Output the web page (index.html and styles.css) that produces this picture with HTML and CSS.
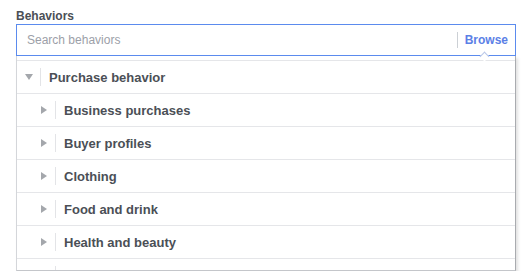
FILE: index.html
```html
<!DOCTYPE html>
<html lang="en">
<head>
  <meta charset="UTF-8" />
  <title>Behaviors</title>
  <link rel="stylesheet" href="styles.css">
</head>
<body>
  <div class="field">
    <label class="field-label" for="behaviors">Behaviors</label>
    <div class="search">
      <input id="behaviors" class="search-input" type="text" placeholder="Search behaviors" />
      <span class="search-divider"></span>
      <a class="browse" href="#">Browse</a>
      <span class="notch"></span>
    </div>

    <div class="menu">
      <ul class="tree">
        <li class="row open">
          <span class="arrow down"></span>
          <span class="row-divider"></span>
          <span class="row-text">Purchase behavior</span>
        </li>
        <li class="row child">
          <span class="arrow"></span>
          <span class="row-divider"></span>
          <span class="row-text">Business purchases</span>
        </li>
        <li class="row child">
          <span class="arrow"></span>
          <span class="row-divider"></span>
          <span class="row-text">Buyer profiles</span>
        </li>
        <li class="row child">
          <span class="arrow"></span>
          <span class="row-divider"></span>
          <span class="row-text">Clothing</span>
        </li>
        <li class="row child">
          <span class="arrow"></span>
          <span class="row-divider"></span>
          <span class="row-text">Food and drink</span>
        </li>
        <li class="row child">
          <span class="arrow"></span>
          <span class="row-divider"></span>
          <span class="row-text">Health and beauty</span>
        </li>
        <li class="row child">
          <span class="arrow"></span>
          <span class="row-divider"></span>
          <span class="row-text">Household products</span>
        </li>
      </ul>
    </div>
  </div>
</body>
</html>
```

FILE: styles.css
```css
body {
  margin: 0;
  background: #fff;
  font-family: "Liberation Sans", Arial, sans-serif;
  color: #4b4f56;
}
.field {
  width: 500px;
  padding: 9px 0 0 16px;
}
.field-label {
  display: block;
  font-size: 12px;
  font-weight: bold;
  line-height: 15px;
}
.search {
  position: relative;
  display: flex;
  align-items: center;
  height: 30px;
  border: 1px solid #5b8bee;
}
.search-input {
  flex: 1;
  border: none;
  outline: none;
  padding: 0 10px;
  font-family: inherit;
  font-size: 12px;
  color: #4b4f56;
}
.search-input::placeholder {
  color: #9ca0a8;
}
.search-divider {
  width: 1px;
  height: 16px;
  background: #ccd0d5;
  margin-right: 7px;
}
.browse {
  font-size: 12px;
  font-weight: bold;
  color: #5b80e6;
  text-decoration: none;
  margin-right: 7px;
}
.notch {
  position: absolute;
  right: 27px;
  bottom: -5px;
  width: 6px;
  height: 6px;
  background: #fff;
  border-left: 1px solid #b9c7e8;
  border-top: 1px solid #b9c7e8;
  transform: rotate(45deg);
}
.menu {
  box-sizing: border-box;
  height: 215px;
  overflow: hidden;
  padding-top: 4px;
  border-left: 1px solid #d4d6da;
  border-right: 1px solid #a9abaf;
  border-bottom: 1px solid #c4c6ca;
  box-shadow: 2px 2px 3px rgba(0, 0, 0, 0.12);
}
.tree {
  list-style: none;
  margin: 0;
  padding: 0;
}
.row {
  display: flex;
  align-items: center;
  height: 32px;
  border-top: 1px solid #e5e6e9;
  padding-left: 8px;
}
.row.child {
  padding-left: 22px;
}
.arrow {
  width: 0;
  height: 0;
  margin-left: 2px;
  border-top: 4px solid transparent;
  border-bottom: 4px solid transparent;
  border-left: 6px solid #a4a7ac;
}
.arrow.down {
  margin-left: 0;
  border-left: 4px solid transparent;
  border-right: 4px solid transparent;
  border-top: 6px solid #a4a7ac;
  border-bottom: none;
}
.row-divider {
  width: 1px;
  height: 18px;
  background: #e3e4e7;
  margin: 0 8px 0 8px;
}
.row.open .row-divider {
  margin-left: 7px;
}
.row-text {
  font-size: 13px;
  font-weight: bold;
  color: #4b4f56;
}
```
